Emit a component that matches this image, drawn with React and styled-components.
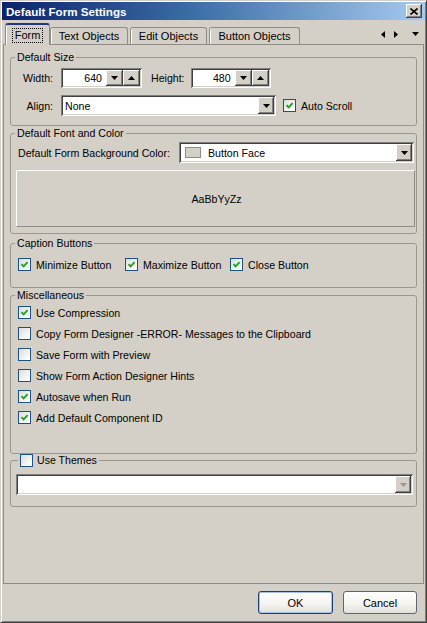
import React from 'react';
import styled, { createGlobalStyle } from 'styled-components';

const GlobalStyle = createGlobalStyle`
  html, body { margin: 0; padding: 0; background: #D4D0C8; }
  body {
    font-family: "Liberation Sans", Arial, sans-serif;
    font-size: 10.6px;
    color: #000;
  }
  * { box-sizing: border-box; }
`;

const Window = styled.div`
  width: 427px;
  height: 623px;
  background: #D4D0C8;
  border-top: 1px solid #D4D0C8;
  border-left: 1px solid #D4D0C8;
  border-right: 1px solid #404040;
  border-bottom: 1px solid #404040;
  box-shadow: inset 1px 1px 0 #fff, inset -1px -1px 0 #808080;
  padding: 1px;
  display: flex;
  flex-direction: column;
`;

const TitleBar = styled.div`
  height: 18px;
  flex: none;
  display: flex;
  align-items: center;
  justify-content: space-between;
  padding: 0 3px 0 4px;
  background: linear-gradient(to right, #0A246A 0%, #3A6EA5 45%, #A6CAF0 100%);
`;

const Title = styled.span`
  color: #fff;
  font-weight: bold;
  font-size: 11.6px;
`;

const CaptionButton = styled.div`
  width: 16px;
  height: 14px;
  background: #D4D0C8;
  display: flex;
  align-items: center;
  justify-content: center;
  box-shadow: inset -1px -1px 0 #404040, inset 1px 1px 0 #fff, inset -2px -2px 0 #808080;
`;

const TabStrip = styled.div`
  height: 24px;
  flex: none;
  display: flex;
  align-items: flex-end;
  padding: 0 6px 0 5px;
`;

const Tab = styled.div`
  position: relative;
  width: ${p => p.$w + (p.$active ? 4 : 0)}px;
  height: ${p => (p.$active ? 22 : 17)}px;
  margin: ${p => (p.$active ? '0 -2px -1px' : '0')};
  z-index: ${p => (p.$active ? 2 : 1)};
  display: flex;
  align-items: ${p => (p.$active ? 'flex-start' : 'center')};
  padding-top: ${p => (p.$active ? '4px' : '0')};
  justify-content: center;
  background: #D4D0C8;
  border: 1px solid #8E8C86;
  border-bottom: none;
  border-top: ${p => (p.$active ? '2px solid #1E3C78' : '1px solid #8E8C86')};
  border-radius: 3px 3px 0 0;
  box-shadow: inset 1px 0 0 #fff;
  font-size: 11px;
  white-space: nowrap;
`;

const Focus = styled.span`
  outline: 1px dotted #000;
  padding: 0 2px;
  line-height: 13px;
`;

const Tabs = styled.div`
  display: flex;
  gap: 2px;
  align-items: flex-end;
`;

const TabScroll = styled.div`
  margin-left: auto;
  align-self: center;
  margin-top: 4px;
  display: flex;
  align-items: center;
`;

const ArrowPair = styled.div`
  display: flex;
  gap: 9px;
  margin-right: 14px;
`;

const Panel = styled.div`
  flex: none;
  height: 540px;
  margin: 0 1px;
  border: 1px solid #8E8C86;
  padding: 12px 6px 0;
  display: flex;
  flex-direction: column;
`;

const Group = styled.section`
  flex: none;
  height: ${p => p.$h}px;
  margin-top: ${p => p.$mt || 0}px;
  border: 1px solid #9A978F;
  border-radius: 3px;
  display: flex;
  flex-direction: column;
`;

const Caption = styled.div`
  margin: -7px 0 0 ${p => p.$ml || 4}px;
  padding: 0 2px;
  align-self: flex-start;
  background: #D4D0C8;
  line-height: 13px;
  height: 13px;
  display: flex;
  align-items: center;
  gap: 4px;
`;

const Body = styled.div`
  padding: ${p => p.$pad};
`;

const SizeGrid = styled.div`
  display: grid;
  grid-template-columns: 35px auto;
  column-gap: 8px;
  row-gap: 7px;
  align-items: center;
`;

const FieldLabel = styled.span`
  text-align: right;
  margin: ${p => p.$m || 0};
`;

const Row = styled.div`
  display: flex;
  align-items: center;
  gap: ${p => p.$gap || 0}px;
`;

const Sunken = styled.div`
  height: ${p => p.$h || 20}px;
  width: ${p => p.$w}px;
  background: #fff;
  box-shadow: inset 1px 1px 0 #808080, inset -1px -1px 0 #fff, inset 2px 2px 0 #404040, inset -2px -2px 0 #D4D0C8;
  padding: 2px;
  display: flex;
  align-items: stretch;
`;

const FieldText = styled.div`
  flex: 1;
  display: flex;
  align-items: center;
  justify-content: ${p => (p.$right ? 'flex-end' : 'flex-start')};
  padding: ${p => (p.$right ? '0 4px 0 0' : '0 0 0 2px')};
  gap: 7px;
  white-space: nowrap;
`;

const RaisedBtn = styled.div`
  width: ${p => p.$w || 17}px;
  flex: none;
  background: #D4D0C8;
  display: flex;
  align-items: center;
  justify-content: center;
  box-shadow: inset -1px -1px 0 #404040, inset 1px 1px 0 #fff, inset -2px -2px 0 #808080;
`;

const Swatch = styled.span`
  width: 16px;
  height: 11px;
  border: 1px solid #8E8C86;
  background: #D4D0C8;
  margin-left: 2px;
`;

const Pushed = styled.div`
  margin: ${p => p.$m};
`;

const Preview = styled.div`
  margin-top: 7px;
  height: 57px;
  border-top: 1px solid #fff;
  border-left: 1px solid #fff;
  border-right: 1px solid #8E8C86;
  border-bottom: 1px solid #8E8C86;
  display: flex;
  align-items: center;
  justify-content: center;
  padding-left: 2px;
`;

const CheckGrid = styled.div`
  display: grid;
  grid-template-columns: 107px 105px auto;
`;

const CheckRow = styled.label`
  display: flex;
  align-items: center;
  gap: 5px;
  height: ${p => p.$h || 13}px;
  margin-left: ${p => p.$ml || 0}px;
  white-space: nowrap;
`;

const CheckBox = styled.span`
  width: 13px;
  height: 13px;
  flex: none;
  border: 1px solid #1C5180;
  background: linear-gradient(135deg, #DCDCD7 0%, #fff 90%);
  display: flex;
  align-items: center;
  justify-content: center;
`;

const ButtonBar = styled.div`
  flex: 1;
  display: flex;
  justify-content: flex-end;
  align-items: flex-start;
  gap: 10px;
  padding: 7px 8px 0 0;
`;

const PushButton = styled.button`
  width: ${p => p.$w}px;
  height: 23px;
  font-family: inherit;
  font-size: 11px;
  color: #000;
  border-radius: 3px;
  border: 1px solid ${p => (p.$default ? '#1E3F75' : '#5E6470')};
  background: linear-gradient(#fff 0%, #F4F3EE 60%, #E2E0D8 100%);
  box-shadow: ${p => (p.$default ? 'inset 0 0 0 1px #A8C0E6' : 'none')};
  padding: 0;
`;

const Tri = ({ dir = 'down', color = '#000' }) => {
  const d = {
    down: 'M0 0 H7 L3.5 4 Z',
    up: 'M0 4 H7 L3.5 0 Z',
    left: 'M4 0 V7 L0 3.5 Z',
    right: 'M0 0 V7 L4 3.5 Z',
  }[dir];
  const vert = dir === 'down' || dir === 'up';
  return (
    <svg width={vert ? 7 : 4} height={vert ? 4 : 7} viewBox={vert ? '0 0 7 4' : '0 0 4 7'}>
      <path d={d} fill={color} />
    </svg>
  );
};

const Check = ({ on }) => (
  <CheckBox>
    {on && (
      <svg width="9" height="9" viewBox="0 0 9 9">
        <path d="M1.5 4.2 L3.6 6.4 L7.6 2.2" stroke="#21A121" strokeWidth="1.9" fill="none" />
      </svg>
    )}
  </CheckBox>
);

const SpinEdit = ({ value, w }) => (
  <Sunken $w={w}>
    <FieldText $right>{value}</FieldText>
    <RaisedBtn><Tri dir="down" /></RaisedBtn>
    <RaisedBtn><Tri dir="up" /></RaisedBtn>
  </Sunken>
);

const Combo = ({ w, h = 21, children, disabled }) => (
  <Sunken $w={w} $h={h}>
    <FieldText>{children}</FieldText>
    <RaisedBtn $w={16}><Tri dir="down" color={disabled ? '#9A978F' : '#000'} /></RaisedBtn>
  </Sunken>
);

const misc = [
  ['Use Compression', true],
  ['Copy Form Designer -ERROR- Messages to the Clipboard', false],
  ['Save Form with Preview', false],
  ['Show Form Action Designer Hints', false],
  ['Autosave when Run', true],
  ['Add Default Component ID', true],
];

export default function App() {
  return (
    <>
      <GlobalStyle />
      <Window>
        <TitleBar>
          <Title>Default Form Settings</Title>
          <CaptionButton>
            <svg width="8" height="7" viewBox="0 0 8 7">
              <path d="M0.5 0.5 L7.5 6.5 M7.5 0.5 L0.5 6.5" stroke="#000" strokeWidth="1.6" />
            </svg>
          </CaptionButton>
        </TitleBar>

        <TabStrip>
          <Tabs>
            <Tab $w={41} $active><Focus>Form</Focus></Tab>
            <Tab $w={78}>Text Objects</Tab>
            <Tab $w={77}>Edit Objects</Tab>
            <Tab $w={91}>Button Objects</Tab>
          </Tabs>
          <TabScroll>
            <ArrowPair>
              <Tri dir="left" />
              <Tri dir="right" />
            </ArrowPair>
            <Tri dir="down" />
          </TabScroll>
        </TabStrip>

        <Panel>
          <Group $h={69}>
            <Caption>Default Size</Caption>
            <Body $pad="4px 0 0 7px">
              <SizeGrid>
                <FieldLabel>Width:</FieldLabel>
                <Row>
                  <SpinEdit value="640" w={81} />
                  <FieldLabel $m="0 6px 0 9px">Height:</FieldLabel>
                  <SpinEdit value="480" w={80} />
                </Row>
                <FieldLabel>Align:</FieldLabel>
                <Row>
                  <Combo w={215}>None</Combo>
                  <CheckRow $ml={7}>
                    <Check on />
                    Auto Scroll
                  </CheckRow>
                </Row>
              </SizeGrid>
            </Body>
          </Group>

          <Group $h={101} $mt={7}>
            <Caption>Default Font and Color</Caption>
            <Body $pad="2px 1px 0 5px">
              <Row>
                <FieldLabel $m="0 0 0 2px">Default Form Background Color:</FieldLabel>
                <Pushed $m="0 1px 0 auto">
                  <Combo w={235}>
                    <Swatch />
                    Button Face
                  </Combo>
                </Pushed>
              </Row>
              <Preview>AaBbYyZz</Preview>
            </Body>
          </Group>

          <Group $h={45} $mt={9}>
            <Caption>Caption Buttons</Caption>
            <Body $pad="8px 0 0 7px">
              <CheckGrid>
                <CheckRow><Check on />Minimize Button</CheckRow>
                <CheckRow><Check on />Maximize Button</CheckRow>
                <CheckRow><Check on />Close Button</CheckRow>
              </CheckGrid>
            </Body>
          </Group>

          <Group $h={159} $mt={7}>
            <Caption>Miscellaneous</Caption>
            <Body $pad="0 0 0 7px">
              {misc.map(([label, on]) => (
                <CheckRow key={label} $h={21}>
                  <Check on={on} />
                  {label}
                </CheckRow>
              ))}
            </Body>
          </Group>

          <Group $h={47} $mt={6}>
            <Caption $ml={7}>
              <Check />
              Use Themes
            </Caption>
            <Body $pad="7px 4px 0 5px">
              <Combo w={397} disabled />
            </Body>
          </Group>
        </Panel>

        <ButtonBar>
          <PushButton $w={75} $default>OK</PushButton>
          <PushButton $w={74}>Cancel</PushButton>
        </ButtonBar>
      </Window>
    </>
  );
}
